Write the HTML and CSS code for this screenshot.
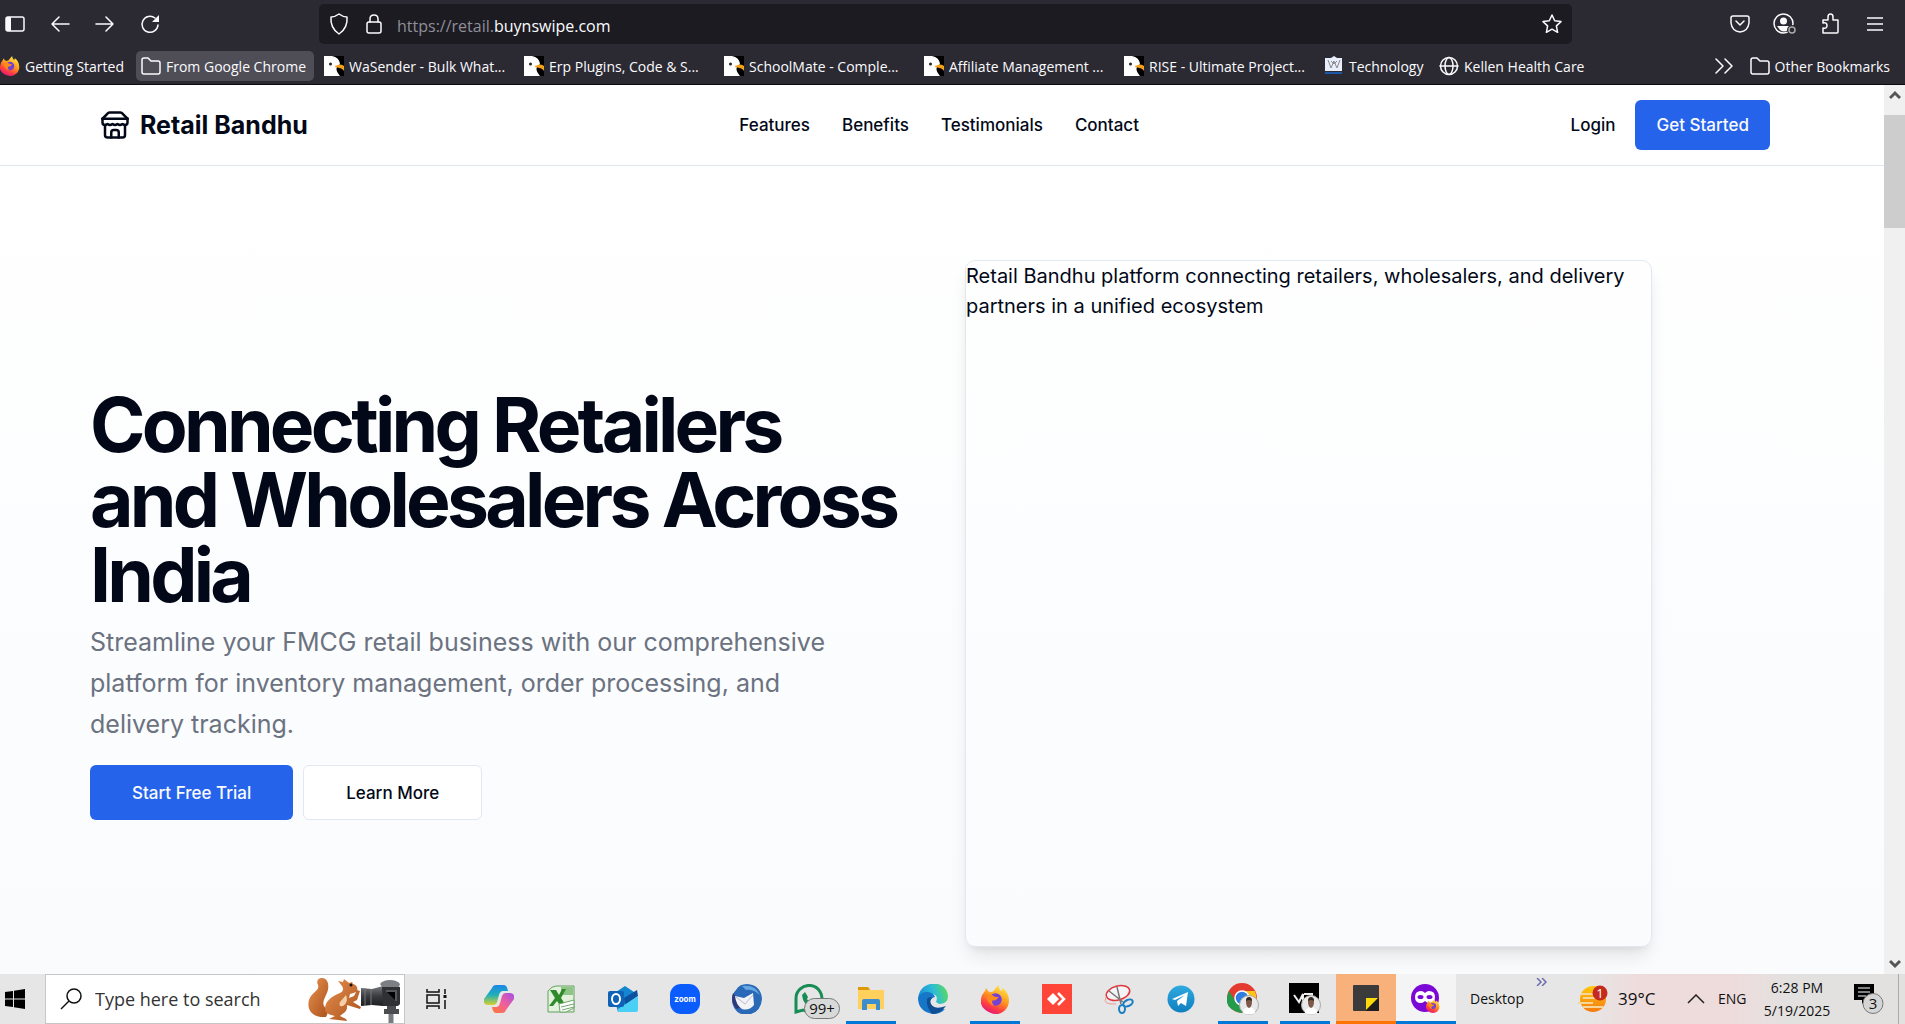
FILE: index.html
```html
<!DOCTYPE html>
<html lang="en">
<head>
<meta charset="utf-8">
<title>Retail Bandhu</title>
<link rel="stylesheet" href="styles.css">
</head>
<body>
<svg width="0" height="0" class="defs" aria-hidden="true">
  <defs>
    <linearGradient id="gFlame" x1="0.8" y1="0" x2="0.3" y2="1"><stop offset="0" stop-color="#fff04a"/><stop offset=".45" stop-color="#ff9a1f"/><stop offset=".75" stop-color="#ff4040"/><stop offset="1" stop-color="#e3127f"/></linearGradient>
    <linearGradient id="gCopA" x1="0" y1="0" x2="0" y2="1"><stop offset="0" stop-color="#1a86e8"/><stop offset=".5" stop-color="#21b0b8"/><stop offset="1" stop-color="#d9d02e"/></linearGradient>
    <linearGradient id="gCopB" x1="1" y1="0" x2="0" y2="1"><stop offset="0" stop-color="#a44ee8"/><stop offset=".5" stop-color="#f0609a"/><stop offset="1" stop-color="#ff7a2f"/></linearGradient>
    <linearGradient id="gEdge" x1="0" y1="0.4" x2="1" y2="0.2"><stop offset="0" stop-color="#1b8fd8"/><stop offset=".5" stop-color="#2bbcd6"/><stop offset="1" stop-color="#5fdc5a"/></linearGradient>
    <linearGradient id="gSun" x1="0" y1="0" x2="0" y2="1"><stop offset="0" stop-color="#ffc90e"/><stop offset="1" stop-color="#f47a10"/></linearGradient>
    <linearGradient id="gFur" x1="0" y1="0" x2="1" y2="1"><stop offset="0" stop-color="#e8924f"/><stop offset="1" stop-color="#a9501c"/></linearGradient>
    <linearGradient id="gLens" x1="0" y1="0" x2="0" y2="1"><stop offset="0" stop-color="#77797d"/><stop offset=".5" stop-color="#3a3c40"/><stop offset="1" stop-color="#1d1e20"/></linearGradient>
    <linearGradient id="gTele" x1="0" y1="0" x2="0" y2="1"><stop offset="0" stop-color="#2fa9e0"/><stop offset="1" stop-color="#0f7fbf"/></linearGradient>
    <symbol id="gull" viewBox="0 0 20 20"><path fill="#000" d="M0 0h20v20H0z"/><path fill="#fff" d="M0 0h8q7 1 8 8l-3 3q-2 3 3 9H0z"/><path fill="#f7a21b" d="M11 10q6-3 9 0v5q-1-3-9-4z"/><circle cx="6.500" cy="8" r="1.500" fill="#222"/></symbol>
    <symbol id="folder" viewBox="0 0 20 20"><path fill="none" stroke="#fbfbfe" stroke-width="1.500" stroke-linejoin="round" d="M1 16V4q0-2 2-2h4l3 3h7q2 0 2 2v9q0 2-2 2H3q-2 0-2-2z"/></symbol>
    <symbol id="firefox" viewBox="0 0 28 28"><path fill="url(#gFlame)" d="M3 7q1-1 2-4 1 3 4 4l3-1q2-3 5-6 0 4 3 6 0-2 1-3 6 5 6 12 0 6-4 9.500T14 28 4 24 0 15q0-5 3-8z"/><circle cx="14" cy="14" r="6" fill="#7341d6"/><path fill="#ff8a1c" d="M5 10q4-2 8 1 3 1 4 0-1 4-6 4-1 3 2 5-7-1-8-10z"/></symbol>
    <symbol id="avatar" viewBox="0 0 20 20"><circle cx="10" cy="10" r="9.500" fill="#e9e9e9" stroke="#aaa"/><path fill="#fff" d="M4 18q0-5 6-6 6 1 6 6-6 3-12 0z"/><path fill="#7c5948" d="M7 6q0-3 3-3t3 3q0 6-3 7-3-1-3-7z"/><path fill="#332722" d="M7 6q0-4 3-4t3 4q-3-2-6 0z"/></symbol>
  </defs>
</svg>

<header class="chrome">
  <div class="toolbar">
    <div class="toolbar-left">
      <button class="tool" aria-label="Sidebar"><svg width="20" height="16" viewBox="0 0 20 16"><rect x="1" y="1" width="18" height="14" rx="2" fill="none" stroke="#fbfbfe" stroke-width="1.500"/><path fill="#fbfbfe" d="M1 1h5v14H1z"/></svg></button>
      <button class="tool" aria-label="Back"><svg width="20" height="16" viewBox="0 0 20 16"><path class="line" d="M19 8H2M9 1 2 8l7 7"/></svg></button>
      <button class="tool" aria-label="Forward"><svg width="20" height="16" viewBox="0 0 20 16"><path class="line" d="M1 8h17M11 1l7 7-7 7"/></svg></button>
      <button class="tool" aria-label="Reload"><svg width="20" height="20" viewBox="0 0 20 20"><path class="line" d="M18 11a8 8 0 1 1-3-7"/><path fill="#fbfbfe" d="M19 1v7h-7z"/></svg></button>
    </div>
    <div class="address">
      <svg width="20" height="22" viewBox="0 0 20 22"><path class="line" d="M10 1q4 3 8 3 1 11-8 17Q1 15 2 4q4 0 8-3z"/></svg>
      <svg width="18" height="22" viewBox="0 0 18 22"><rect class="line" x="2" y="9" width="14" height="11" rx="2"/><path class="line" d="M5 9V6q0-4 4-4t4 4v3"/></svg>
      <div class="url" role="textbox" contenteditable="true" spellcheck="false" aria-label="Address">https://retail.<span class="host">buynswipe.com</span></div>
      <svg width="20" height="20" viewBox="0 0 20 20"><path class="line" d="m10 1 2.700 5.800 6.300.8-4.600 4.300 1.200 6.400L10 15.200l-5.600 3.100 1.200-6.400L1 7.600l6.300-.8z"/></svg>
    </div>
    <div class="toolbar-right">
      <button class="tool" aria-label="Pocket"><svg width="20" height="18" viewBox="0 0 20 18"><path class="line" d="M3 1h14q2 0 2 2v5q-1 8-9 9-8-1-9-9V3q0-2 2-2zM6 6l4 4 4-4"/></svg></button>
      <button class="tool" aria-label="Account"><svg width="24" height="22" viewBox="0 0 24 22"><circle class="line" cx="10.500" cy="10.500" r="9.500"/><circle cx="10.500" cy="8" r="3.500" fill="#fbfbfe"/><path fill="#fbfbfe" d="M4 13h13l-2 4q-4 3-8 0z"/><circle cx="19" cy="17" r="5" fill="#2b2a33"/><circle cx="19" cy="17" r="3" fill="none" stroke="#aaa" stroke-width="1.500"/></svg></button>
      <button class="tool" aria-label="Extensions"><svg width="20" height="22" viewBox="0 0 20 22"><path class="line" d="M3 20v-5q4 1 4-2.500T3 10V7h5V4q0-3 2.500-3T13 4v3h5v12q0 1-1 1z"/></svg></button>
      <button class="tool" aria-label="Menu"><svg width="16" height="14" viewBox="0 0 16 14"><path class="line" d="M0 1h16M0 7h16M0 13h16"/></svg></button>
    </div>
  </div>
  <nav class="bookmarks" aria-label="Bookmarks">
    <a class="mark mark-first" href="#"><svg width="20" height="20"><use href="#firefox"/></svg><span>Getting Started</span></a>
    <a class="mark mark-active" href="#"><svg width="20" height="20"><use href="#folder"/></svg><span>From Google Chrome</span></a>
    <a class="mark mark-long" href="#"><svg width="20" height="20"><use href="#gull"/></svg><span>WaSender - Bulk What...</span></a>
    <a class="mark mark-long" href="#"><svg width="20" height="20"><use href="#gull"/></svg><span>Erp Plugins, Code &amp; S...</span></a>
    <a class="mark mark-long" href="#"><svg width="20" height="20"><use href="#gull"/></svg><span>SchoolMate - Comple...</span></a>
    <a class="mark mark-long" href="#"><svg width="20" height="20"><use href="#gull"/></svg><span>Affiliate Management ...</span></a>
    <a class="mark mark-long" href="#"><svg width="20" height="20"><use href="#gull"/></svg><span>RISE - Ultimate Project...</span></a>
    <a class="mark mark-tech" href="#"><svg width="20" height="20" viewBox="0 0 20 20"><path fill="#e8eefc" d="M1 2h6l3-2 3 2h5v13H1z"/><path fill="none" stroke="#888" d="m4 4 3 8 3-7 3 7 3-8M7 5l3 3 3-3"/><path stroke="#1d57a8" stroke-width="2" d="M1 17h17"/></svg><span>Technology</span></a>
    <a class="mark" href="#"><svg width="20" height="20" viewBox="0 0 20 20"><g class="line"><circle cx="10" cy="10" r="8.500"/><ellipse cx="10" cy="10" rx="4" ry="8.500"/><path d="M1 10h18"/></g></svg><span>Kellen Health Care</span></a>
    <button class="tool more" aria-label="More bookmarks"><svg width="18" height="16" viewBox="0 0 18 16"><path class="line" d="m1 1 7 7-7 7M10 1l7 7-7 7"/></svg></button>
    <a class="mark mark-other" href="#"><svg width="20" height="20"><use href="#folder"/></svg><span>Other Bookmarks</span></a>
  </nav>
</header>

<div class="viewport">
  <div class="page">
    <header class="site-header">
      <a class="brand" href="#"><svg width="30" height="30" viewBox="0 0 24 24" fill="none" stroke="#020817" stroke-width="2" stroke-linecap="round" stroke-linejoin="round"><path d="m2 7 4.410-4.410A2 2 0 0 1 7.830 2h8.340a2 2 0 0 1 1.420.590L22 7"/><path d="M4 12v8a2 2 0 0 0 2 2h12a2 2 0 0 0 2-2v-8"/><path d="M15 22v-4a2 2 0 0 0-2-2h-2a2 2 0 0 0-2 2v4"/><path d="M2 7h20"/><path d="M22 7v3a2 2 0 0 1-2 2a2.700 2.700 0 0 1-1.590-.630.700.700 0 0 0-.820 0A2.700 2.700 0 0 1 16 12a2.700 2.700 0 0 1-1.590-.630.700.700 0 0 0-.820 0A2.700 2.700 0 0 1 12 12a2.700 2.700 0 0 1-1.590-.630.700.700 0 0 0-.820 0A2.700 2.700 0 0 1 8 12a2.700 2.700 0 0 1-1.590-.630.700.700 0 0 0-.820 0A2.700 2.700 0 0 1 4 12a2 2 0 0 1-2-2V7"/></svg>Retail Bandhu</a>
      <nav class="site-nav"><a href="#">Features</a><a href="#">Benefits</a><a href="#">Testimonials</a><a href="#">Contact</a></nav>
      <div class="account"><a href="#">Login</a><button class="btn btn-primary btn-header">Get Started</button></div>
    </header>
    <main class="hero">
      <div class="pitch">
        <h1>Connecting Retailers and Wholesalers Across India</h1>
        <p>Streamline your FMCG retail business with our comprehensive platform for inventory management, order processing, and delivery tracking.</p>
        <div class="actions"><button class="btn btn-primary btn-large">Start Free Trial</button><button class="btn btn-outline btn-large">Learn More</button></div>
      </div>
      <div class="card">Retail Bandhu platform connecting retailers, wholesalers, and delivery partners in a unified ecosystem</div>
    </main>
  </div>
  <div class="scrollbar" aria-hidden="true">
    <svg class="arrow" width="12" height="10" viewBox="0 0 12 10"><path d="m1 8 5-5 5 5"/></svg>
    <div class="track"><div class="thumb"></div></div>
    <svg class="arrow" width="12" height="10" viewBox="0 0 12 10"><path d="m1 2 5 5 5-5"/></svg>
  </div>
</div>

<footer class="taskbar">
  <button class="start" aria-label="Start"><svg width="20" height="20" viewBox="0 0 20 20"><path d="m0 3 8-1v7.500H0zM9 1.800 20 0v9.500H9zM0 10.500h8V18l-8-1zM9 10.500h11V20L9 18.200z"/></svg></button>
  <label class="search">
    <svg width="22" height="22" viewBox="0 0 22 22" fill="none" stroke="#111" stroke-width="1.500"><circle cx="14" cy="8" r="7"/><path d="m9 13-8 8"/></svg>
    <input type="text" placeholder="Type here to search" aria-label="Search">
    <svg class="squirrel" width="94" height="48" viewBox="0 0 94 48">
      <path fill="url(#gFur)" d="M18 42C6 43-2 36 1 25c2-8 11-9 9-15C8 6 10 3 14 3c7 0 8 10 4 17-4 8-4 12 3 15z"/>
      <path fill="url(#gFur)" d="M17 34c0-8 7-13 15-16 3-1 4-4 2-7l-4-5 5 1 1-3 5 4 3-1 1 2c4 1 5 4 4 7-2 2-5 2-7 3l-1 4 5-2 3-6 3 1-3 9-4 2 8 5-1 2-13-4c1 7-4 8-7 11l6 3 1 2-9-1-9-1 6-3c-5-1-10-3-10-7z"/>
      <path fill="#f4cfa8" d="M38 20q3 7-3 11-5 1-3-4z"/><circle cx="43" cy="10" r="1.500" fill="#111"/>
      <path fill="url(#gLens)" d="m53 13 11 1 11-3v20l-11-1-11 1z"/><path stroke="#77797d" d="M57 13v18m6-17v16"/>
      <path fill="#7c8085" d="M72 9q3-4 10-4t10 4l-1 3H74z"/><path fill="#2f3134" d="M74 12h18v17l-2 2H75z"/><path stroke="#55585c" stroke-width="2" d="M78 16h10v10"/><path fill="#4a4c50" d="M79 31h9v3h3v5H76v-5h3z"/><path stroke="#777b82" stroke-width="5" d="M83 39v9"/>
    </svg>
  </label>
  <button class="task" aria-label="Task view"><svg width="22" height="20" viewBox="0 0 22 20" fill="none" stroke="#111" stroke-width="1.500"><path d="M1 0v3h12V0M1 20v-3h12v3M1 6h12v8H1zM19 0v5M19 11v9"/><path stroke-width="3" d="M19 6v3"/></svg></button>
  <button class="task" aria-label="Copilot"><svg width="30" height="28" viewBox="0 0 30 28"><path fill="url(#gCopA)" d="M8 3q1-3 4-3h8q3 0 4 6h-5q-3 0-4 4l-2 7q-1 3-4 3H4q-5 0-4-6z"/><path fill="url(#gCopB)" d="M22 25q-1 3-4 3h-6q-3 0-4-6h4q3 0 4-4l2-7q1-3 4-3h4q5 0 4 6z"/></svg></button>
  <button class="task" aria-label="Excel"><svg width="28" height="28" viewBox="0 0 28 28"><path fill="#e3f1dd" stroke="#60a05c" d="M1 6q4-5 8-5h18v26H1z"/><path fill="#8ec586" d="M14 2h12v8H14z"/><path fill="#2f8a2c" d="M3 5h6l3 5 3-6h4l-5 9 6 9h-6l-4-6-4 5H2l6-8z"/><path fill="#fff" stroke="#72a66c" d="m12 19 15-4v8l-8 4h-6z"/><path stroke="#72a66c" d="m14 22 13-3M15 25l12-3"/></svg></button>
  <button class="task" aria-label="Outlook"><svg width="30" height="28" viewBox="0 0 30 28"><path fill="#1685d1" d="m5 9 12-8 12 8v2L10 27z"/><path fill="#0b51a0" d="m16 13 13-8 1 6-13 9z"/><path fill="#4bd0f5" d="m30 11-20 13v1q0 2 2 2h16q2 0 2-2z"/><rect y="6" width="16" height="16" rx="2" fill="#0f62b5"/><ellipse cx="8" cy="14" rx="4" ry="5" fill="none" stroke="#fff" stroke-width="2"/></svg></button>
  <button class="task" aria-label="Zoom"><span class="zoom-logo">zoom</span></button>
  <button class="task" aria-label="Thunderbird"><svg width="30" height="30" viewBox="0 0 30 30"><path fill="#2969b7" d="M4 6Q7 0 15 0q14 1 15 15-1 12-11 15H9Q0 26 0 15q0-5 4-9z"/><path fill="#2c3a7a" d="M1 9q-3 10 4 16l5-2-5-9z"/><path fill="#63a8e2" d="M10 2q13-2 18 9-7-6-14-5z"/><path fill="#f2f3f7" d="m3 12 9 2 9-5 1 12q-5 6-12 4-6-4-7-13z"/><path fill="none" stroke="#bbc" d="m4 13 9 7 8-9"/></svg></button>
  <button class="task" aria-label="WhatsApp"><svg width="30" height="30" viewBox="0 0 30 30"><path fill="none" stroke="#188c55" stroke-width="3" d="M2 28V15A13 13 0 1 1 9 26z"/><path fill="#188c55" d="m8 11 3-3 3 5-1 2q2 4 5 5l2-1 3 2q-1 3-5 3Q9 21 8 11z"/></svg><span class="badge">99+</span></button>
  <button class="task open" aria-label="File Explorer"><svg width="28" height="24" viewBox="0 0 28 24"><path fill="#dc9a0b" d="M1 0h10l3 4H1z"/><path fill="#ffd15c" d="M1 3h26v19H1z"/><path fill="#3c8dcd" d="M5 14q0-2 2-2h14q2 0 2 2v9h-4v-6h-9v6H5z"/></svg></button>
  <button class="task" aria-label="Edge"><svg width="30" height="30" viewBox="0 0 30 30"><path fill="url(#gEdge)" d="M0 15C1-5 29-5 30 12q0 8-9 8l-3-2q3-7-4-8-8 0-14 5z"/><path fill="#1676c7" d="M0 15q1-6 8-7 7 0 9 5-5 1-5 7 2 8 15 5-4 5-12 5Q1 28 0 15z"/><path fill="#104f93" d="M9 15q-1 8 5 15 8 0 14-8-14 5-16-5l2-4q-4 0-5 2z"/></svg></button>
  <button class="task open" aria-label="Firefox"><svg width="29" height="29"><use href="#firefox"/></svg></button>
  <button class="task" aria-label="AnyDesk"><svg width="30" height="30" viewBox="0 0 30 30"><path fill="#ff4438" d="M0 0h30v30H0z"/><path fill="#fff" d="m5 15 6-6 6 6-6 6z"/><path fill="none" stroke="#fff" stroke-width="2.500" d="m16 9 6 6-6 6"/></svg></button>
  <button class="task" aria-label="Snipping Tool"><svg width="30" height="30" viewBox="0 0 30 30" fill="none"><ellipse cx="14" cy="9" rx="12" ry="7" fill="#f4f4f6" stroke="#e0383d" stroke-width="1.500" transform="rotate(-15 14 9)"/><path stroke="#e99" d="M2 13q-4 8 10 7"/><path stroke="#777" stroke-width="1.500" d="m5 7 14 11M13 3l4 17"/><g stroke="#187fc4" stroke-width="2"><ellipse cx="24" cy="19" rx="5" ry="3" transform="rotate(-25 24 19)"/><ellipse cx="18" cy="25" rx="3" ry="4"/></g></svg></button>
  <button class="task" aria-label="Telegram"><svg width="28" height="28" viewBox="0 0 28 28"><circle cx="14" cy="14" r="13.500" fill="url(#gTele)"/><path fill="#fff" d="m5 14 16-7-2 14-5-3-3 3-1-5 8-6-10 5z"/></svg></button>
  <button class="task open" aria-label="Chrome"><svg width="32" height="32" viewBox="0 0 32 32"><circle cx="15" cy="15" r="15" fill="#e43b30"/><path fill="#fbc31c" d="M15 8h13q6 18-13 22l6-10z"/><path fill="#259a48" d="M2 8Q-6 27 15 30l6-10-12-1z"/><circle cx="15" cy="15" r="7" fill="#2f7de2" stroke="#fff" stroke-width="1.500"/><use href="#avatar" x="12" y="12" width="20" height="20"/></svg></button>
  <button class="task open" aria-label="VR profile"><svg width="32" height="32" viewBox="0 0 32 32"><path d="M0 0h30v30H0z"/><path fill="none" stroke="#eee" stroke-width="2" d="m5 12 5 7 4-8v8M15 11h8v5"/><use href="#avatar" x="12" y="12" width="20" height="20"/></svg></button>
  <button class="task alert" aria-label="Sticky Notes"><svg width="26" height="26" viewBox="0 0 26 26"><rect width="26" height="26" rx="1" fill="#3b3b3b"/><path fill="#1f1f1f" d="M13 13h13v13H13z"/><path fill="#ffda0a" d="M13 13h12L13 25z"/></svg></button>
  <button class="task current" aria-label="Private browser"><svg width="30" height="30" viewBox="0 0 30 30"><circle cx="14" cy="15" r="14" fill="#7b08d4"/><path fill="#fff" d="M4 14q0-6 6-6 2 0 4 2 2-2 4-2 6 0 6 6t-6 6q-2 0-4-2-2 2-4 2-6 0-6-6z"/><g fill="#7b08d4"><ellipse cx="9.500" cy="14" rx="3" ry="2"/><ellipse cx="18.500" cy="14" rx="3" ry="2"/></g><use href="#firefox" x="15" y="16" width="14" height="14"/></svg></button>
  <div class="tray">
    <span class="desktop">Desktop</span>
    <svg class="overflow" width="11" height="8" viewBox="0 0 11 8"><path fill="none" stroke="#6c6cae" stroke-width="1.500" d="m1 0 4 4-4 4M6 0l4 4-4 4"/></svg>
    <button class="weather"><svg width="30" height="28" viewBox="0 0 30 28"><circle cx="15" cy="14" r="13" fill="url(#gSun)"/><path stroke="#f7d69a" stroke-width="2" d="M3 9h14M5 13h19M0 18h15M5 22h20"/><circle cx="22" cy="8" r="7.500" fill="#c42b1c"/><text x="22" y="13" text-anchor="middle" font-size="13" fill="#fff">1</text></svg>39°C</button>
    <button class="up" aria-label="Hidden icons"><svg width="18" height="10" viewBox="0 0 18 10"><path fill="none" stroke="#222" stroke-width="1.500" d="m1 9 8-8 8 8"/></svg></button>
    <span class="lang">ENG</span>
    <span class="clock">6:28 PM<br>5/19/2025</span>
    <button class="notes" aria-label="Notifications"><svg width="30" height="30" viewBox="0 0 30 30"><path d="M0 0h20v16h-8l-4 4v-4H0z"/><path stroke="#fff" d="M4 4h12M4 8h12M4 12h8"/><circle cx="19" cy="19.500" r="10" fill="#d5d5d5" stroke="#777"/><text x="19" y="25" text-anchor="middle" font-size="15" fill="#111">3</text></svg></button>
  </div>
</footer>
</body>
</html>
```
FILE: styles.css
```css
* { box-sizing: border-box; }
body { margin: 0; min-height: 100vh; display: flex; flex-direction: column; font-family: "Open Sans", "Noto Sans", sans-serif; color: #020817; }
button { border: 0; padding: 0; background: none; font: inherit; color: inherit; }
a { color: inherit; text-decoration: none; }
svg { display: block; flex: none; }
.defs { position: absolute; }
.line { fill: none; stroke: #fbfbfe; stroke-width: 1.5; stroke-linecap: round; stroke-linejoin: round; }

/* Browser window */
.chrome { background: #2b2a33; color: #fbfbfe; border-bottom: 1px solid #0c0c0d; }
.toolbar { display: flex; align-items: center; height: 48px; padding-right: 8px; }
.tool { display: grid; place-items: center; flex: none; }
.toolbar-left { display: flex; flex: none; width: 319px; }
.toolbar-left .tool { width: 45px; height: 40px; padding-right: 15px; }
.address { flex: 1; min-width: 0; display: flex; align-items: center; height: 40px; padding: 0 10px; background: #1c1b22; border-radius: 5px; }
.address svg + svg { margin-left: 16px; }
.url { flex: 1; margin-left: 14px; padding-top: 3px; font-size: 16px; line-height: 24px; color: #8f8f98; outline: 0; white-space: nowrap; }
.host { color: #fbfbfe; }
.toolbar-right { display: flex; flex: none; width: 325px; justify-content: flex-end; }
.toolbar-right .tool { width: 45px; height: 40px; }
.bookmarks { display: flex; align-items: center; height: 36px; font-size: 14px; line-height: 20px; }
.mark { display: flex; align-items: center; gap: 5px; height: 30px; white-space: nowrap; flex: none; }
.mark span { padding-top: 2px; }
.mark-first { width: 136px; }
.mark-active { width: 178px; padding-left: 5px; background: #4f4e57; border-radius: 5px; margin-right: 10px; }
.mark-long { width: 200px; }
.mark-tech { width: 115px; }
.more { margin: 0 8px 0 auto; width: 36px; }
.mark-other { padding-right: 15px; }

/* Web page */
.viewport { flex: 1; display: flex; }
.page { flex: 1; min-width: 0; display: flex; flex-direction: column; font-family: Inter, sans-serif; background: #fff; }
.site-header { display: flex; align-items: center; justify-content: space-between; padding: 15px 114px 15px 100px; border-bottom: 1px solid #e2e8f0; font-size: 17px; line-height: 24px; font-weight: 500; }
.brand { display: flex; align-items: center; gap: 10px; font-size: 25px; line-height: 35px; font-weight: 700; }
.site-nav { display: flex; gap: 32px; }
.account { display: flex; align-items: center; gap: 20px; }
.btn { border-radius: 6px; font-size: 17px; line-height: 24px; font-weight: 500; }
.btn-header { height: 50px; padding: 0 21px; }
.btn-large { height: 55px; padding: 0 42px; }
.btn-primary { background: #2563eb; color: #f8fafc; }
.btn-outline { background: #fff; border: 1px solid #e2e8f0; }
.hero { flex: 1; display: grid; grid-template-columns: 1fr minmax(0, 687px); gap: 60px; align-items: center; padding: 94px 232px 27px 90px; background: linear-gradient(#fff, #f9fbfd); }
h1 { margin: 0 0 10px; font-size: 75px; line-height: 75px; font-weight: 700; letter-spacing: -0.05em; }
.pitch p { margin: 0 0 20px; max-width: 750px; font-size: 25px; line-height: 41px; color: #6b7280; }
.actions { display: flex; gap: 10px; }
.card { aspect-ratio: 1; border: 1px solid #e2e8f0; border-radius: 10px; font-size: 20px; line-height: 30px; box-shadow: 0 12px 19px -4px #0000001a, 0 5px 8px -5px #0000001a; }
.scrollbar { flex: none; width: 21px; display: flex; flex-direction: column; align-items: center; padding: 5px 0; background: #f0f0f0; }
.track { flex: 1; width: 21px; padding-top: 15px; }
.thumb { height: 113px; background: #cdcdcd; }
.arrow path { fill: none; stroke: #555; stroke-width: 3; }

/* Desktop taskbar */
.taskbar { display: flex; height: 50px; background: linear-gradient(90deg, #e6e6e6 83%, #eedcdc 86%, #eedcdc 91%, #e2e1e0 94%); color: #111; }
.start { flex: none; width: 45px; padding-left: 5px; }
.search { flex: none; width: 360px; display: flex; align-items: center; margin-right: 1px; padding-left: 14px; background: #fff; border: 1px solid #c6c6c6; overflow: hidden; }
.search input { flex: 1; min-width: 0; margin-left: 13px; padding: 0; border: 0; outline: 0; background: none; font: 18px/24px "Open Sans", "Noto Sans", sans-serif; }
.search input::placeholder { color: #333; opacity: 1; }
.squirrel { margin-right: 2px; }
.task { position: relative; flex: none; width: 62px; display: grid; place-items: center; }
.open { background: linear-gradient(#0078d7, #0078d7) center bottom / 50px 3px no-repeat; }
.alert { width: 60px; background: #f9b17c; border-bottom: 3px solid #ff7300; }
.current { width: 60px; background: #f4f4f4; border-bottom: 3px solid #0078d7; }
.zoom-logo { display: grid; place-items: center; width: 30px; height: 30px; border-radius: 11px; background: #0b5cff; color: #fff; font: 700 8px/12px Inter, sans-serif; }
.badge { position: absolute; left: 26px; top: 24px; width: 36px; height: 21px; border: 1px solid #777; border-radius: 11px; background: #d8dad9; font-size: 15px; line-height: 19px; }
.tray { flex: 1; display: flex; align-items: center; padding-left: 14px; font-size: 15px; line-height: 24px; }
.desktop { width: 66px; font-size: 14px; }
.overflow { align-self: flex-start; margin-top: 4px; }
.weather { display: flex; align-items: center; gap: 10px; width: 109px; margin-left: 31px; font-size: 17px; white-space: nowrap; }
.up { width: 31px; }
.lang { width: 36px; font-size: 14px; }
.clock { width: 86px; text-align: center; font-size: 14px; line-height: 23px; }
.notes { margin-left: 14px; margin-right: auto; }
.tray::after { content: ""; align-self: stretch; width: 6px; border-left: 1px solid #aaa; }
```
